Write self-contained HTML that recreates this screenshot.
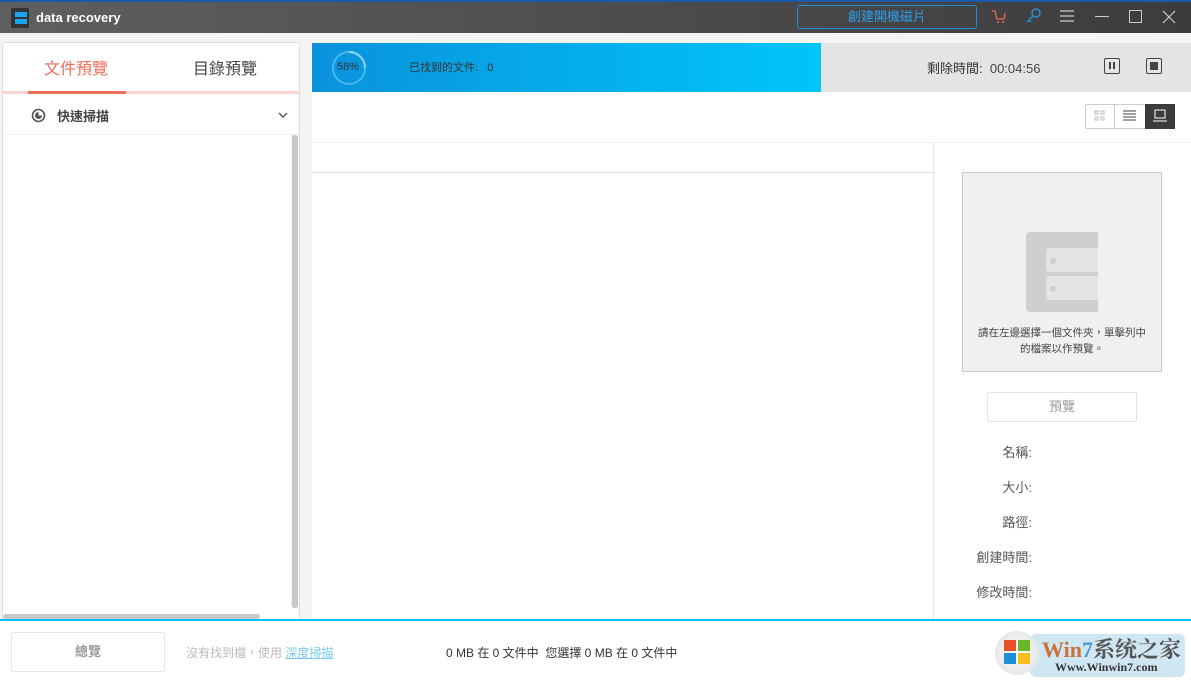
<!DOCTYPE html>
<html><head><meta charset="utf-8"><style>
*{margin:0;padding:0;box-sizing:border-box}
body{width:1191px;height:683px;overflow:hidden;background:#f4f4f4;font-family:"Liberation Sans","Noto Sans CJK TC",sans-serif;position:relative;font-size:13px;color:#333}
.a{position:absolute}
</style></head><body>
<div class="a" style="left:0;top:0;width:1191px;height:33px;background:linear-gradient(90deg,#5f5f5f,#3c3c3c);border-top:2px solid #1a5aa8"></div>
<div class="a" style="left:11px;top:8px;width:18px;height:20px;background:#333;border-radius:2px"></div>
<div class="a" style="left:15px;top:12px;width:12px;height:5px;background:#1aa6ee"></div>
<div class="a" style="left:15px;top:19px;width:12px;height:5px;background:#1aa6ee"></div>
<div class="a" style="left:36px;top:10px;color:#fff;font-weight:bold;font-size:13px">data recovery</div>
<div class="a" style="left:797px;top:5px;width:180px;height:24px;border:1px solid #1e8fd8;border-radius:3px;color:#2aa0ee;text-align:center;line-height:22px;font-size:13px">創建開機磁片</div>
<svg class="a" style="left:990px;top:8px" width="16" height="16"><path d="M2 3h3l2 8h7l1-6" stroke="#e76d5a" fill="none" stroke-width="1.3"/><circle cx="8" cy="14" r="1" fill="#e76d5a"/><circle cx="13" cy="14" r="1" fill="#e76d5a"/></svg>
<svg class="a" style="left:1025px;top:7px" width="18" height="18"><circle cx="11" cy="6" r="4" stroke="#2a90d8" fill="none" stroke-width="1.4"/><path d="M8 9L2 15M4 13l2 2" stroke="#2a90d8" stroke-width="1.4"/></svg>
<svg class="a" style="left:1060px;top:9px" width="14" height="14"><path d="M0 2h14M0 7h14M0 12h14" stroke="#ccc" stroke-width="1.2"/></svg>
<div class="a" style="left:1095px;top:16px;width:14px;height:1px;background:#ccc"></div>
<div class="a" style="left:1129px;top:10px;width:13px;height:13px;border:1px solid #ccc"></div>
<svg class="a" style="left:1162px;top:10px" width="14" height="14"><path d="M1 1l12 12M13 1L1 13" stroke="#ccc" stroke-width="1.2"/></svg>

<div class="a" style="left:2px;top:42px;width:298px;height:579px;background:#fff;border:1px solid #ddd;border-radius:3px 3px 0 0"></div>
<div class="a" style="left:2px;top:91px;width:298px;height:3px;background:#fcd6d0"></div>
<div class="a" style="left:28px;top:91px;width:98px;height:3px;background:#ef6d59"></div>
<div class="a" style="left:44px;top:55px;font-size:16px;color:#ef6d59">文件預覽</div>
<div class="a" style="left:193px;top:55px;font-size:16px;color:#444">目錄預覽</div>
<svg class="a" style="left:31px;top:108px" width="15" height="15"><circle cx="7.5" cy="7.5" r="6" stroke="#555" stroke-width="1.6" fill="none"/><path d="M7.5 4a3.5 3.5 0 1 0 3.5 3.5H7.5z" fill="#555"/></svg>
<div class="a" style="left:57px;top:106px;font-weight:bold;color:#444">快速掃描</div>
<svg class="a" style="left:278px;top:111px" width="10" height="8"><path d="M1 2l4 4 4-4" stroke="#555" fill="none" stroke-width="1.4"/></svg>
<div class="a" style="left:3px;top:134px;width:296px;height:1px;background:#eee"></div>
<div class="a" style="left:291px;top:135px;width:8px;height:473px;background:#f2f2f2"></div>
<div class="a" style="left:292px;top:135px;width:6px;height:473px;background:#c8c8c8;border-radius:3px"></div>
<div class="a" style="left:3px;top:614px;width:257px;height:5px;background:#c8c8c8;border-radius:3px"></div>

<div class="a" style="left:312px;top:43px;width:879px;height:49px;background:#e4e4e4"></div>
<div class="a" style="left:312px;top:43px;width:509px;height:49px;background:linear-gradient(90deg,#0a92dc,#00c6f8)"></div>
<svg class="a" style="left:329px;top:48px" width="40" height="40"><circle cx="20" cy="20" r="16" stroke="#47b7ee" stroke-width="2" fill="none"/><path d="M20 4a16 16 0 0 1 16 16" stroke="#8fd5f8" stroke-width="2" fill="none"/></svg>
<div class="a" style="left:337px;top:61px;font-size:11px;color:#333">58%</div>
<div class="a" style="left:409px;top:59px;font-size:11px;color:#333">已找到的文件:&nbsp;&nbsp; 0</div>
<div class="a" style="left:927px;top:58px;color:#333">剩除時間:&nbsp; <span style="color:#444">00:04:56</span></div>
<div class="a" style="left:1104px;top:58px;width:16px;height:16px;border:1px solid #444;border-radius:2px"></div>
<div class="a" style="left:1109px;top:62px;width:2px;height:7px;background:#444"></div>
<div class="a" style="left:1113px;top:62px;width:2px;height:7px;background:#444"></div>
<div class="a" style="left:1146px;top:58px;width:16px;height:16px;border:1px solid #444;border-radius:2px"></div>
<div class="a" style="left:1150px;top:62px;width:8px;height:8px;background:#444"></div>

<div class="a" style="left:312px;top:92px;width:879px;height:529px;background:#fff"></div>
<div class="a" style="left:312px;top:142px;width:879px;height:1px;background:#f0f0f0"></div>
<div class="a" style="left:1085px;top:104px;width:90px;height:25px;border:1px solid #ccc;border-radius:2px"></div>
<div class="a" style="left:1114px;top:105px;width:1px;height:23px;background:#ccc"></div>
<div class="a" style="left:1145px;top:104px;width:30px;height:25px;background:#3c3c3c"></div>
<svg class="a" style="left:1094px;top:110px" width="12" height="12"><path d="M1 1h3v3H1zM7 1h3v3H7zM1 7h3v3H1zM7 7h3v3H7z" stroke="#bbb" fill="none"/></svg>
<svg class="a" style="left:1123px;top:110px" width="14" height="12"><path d="M0 1h13M0 4h13M0 7h13M0 10h13" stroke="#444"/></svg>
<svg class="a" style="left:1153px;top:109px" width="14" height="14"><path d="M2 1h10v8H2zM0 12h14" stroke="#fff" fill="none"/></svg>
<div class="a" style="left:312px;top:172px;width:621px;height:1px;background:#ddd"></div>
<div class="a" style="left:933px;top:143px;width:1px;height:478px;background:#e6e6e6"></div>
<div class="a" style="left:962px;top:172px;width:200px;height:200px;background:#f0f0f0;border:1px solid #c8c8c8"></div>
<div class="a" style="left:1026px;top:232px;width:72px;height:80px;background:#cfcfcf;border-radius:4px 0 0 4px"></div>
<div class="a" style="left:1046px;top:248px;width:52px;height:24px;background:#e4e4e4;border-radius:3px 0 0 3px"></div>
<div class="a" style="left:1046px;top:276px;width:52px;height:24px;background:#e4e4e4;border-radius:3px 0 0 3px"></div>
<div class="a" style="left:1050px;top:258px;width:6px;height:6px;background:#cfcfcf;border-radius:3px"></div>
<div class="a" style="left:1050px;top:286px;width:6px;height:6px;background:#cfcfcf;border-radius:3px"></div>
<div class="a" style="left:963px;top:325px;width:198px;text-align:center;font-size:10.5px;line-height:16px;color:#444">請在左邊選擇一個文件夾，單擊列中<br>的檔案以作預覽。</div>
<div class="a" style="left:987px;top:392px;width:150px;height:30px;border:1px solid #e4e4e4;border-radius:2px;text-align:center;line-height:28px;color:#999">預覽</div>
<div class="a" style="left:960px;top:435px;width:72px;text-align:right;line-height:35px;color:#555">名稱:<br>大小:<br>路徑:<br>創建時間:<br>修改時間:</div>

<div class="a" style="left:0;top:619px;width:1191px;height:64px;background:#fff;border-top:2px solid #00c3f4"></div>
<div class="a" style="left:11px;top:632px;width:154px;height:40px;border:1px solid #e6e6e6;border-radius:3px;text-align:center;line-height:38px;color:#999;font-weight:bold">總覽</div>
<div class="a" style="left:186px;top:644px;color:#bbb;font-size:12px">沒有找到檔，使用 <span style="color:#7ccaf0;text-decoration:underline">深度掃描</span></div>
<div class="a" style="left:446px;top:644px;color:#333;font-size:12px">0 MB 在 0 文件中&nbsp; 您選擇 0 MB 在 0 文件中</div>
<div class="a" style="left:1030px;top:634px;width:155px;height:43px;background:#cfe6f3;border-radius:6px"></div>
<div class="a" style="left:995px;top:631px;width:44px;height:44px;border-radius:50%;background:radial-gradient(#fff,#ddd)"></div>
<div class="a" style="left:1004px;top:640px;width:12px;height:11px;background:#e8502a"></div>
<div class="a" style="left:1018px;top:640px;width:12px;height:11px;background:#6ab52c"></div>
<div class="a" style="left:1004px;top:653px;width:12px;height:11px;background:#1c8fd8"></div>
<div class="a" style="left:1018px;top:653px;width:12px;height:11px;background:#f6be1a"></div>
<div class="a" style="left:1042px;top:633px;font-size:22px;font-weight:bold;color:#c8723a;font-family:'Liberation Serif','Noto Serif CJK SC',serif">Win<span style="color:#4a9ad0">7</span><span style="color:#555">系统之家</span></div>
<div class="a" style="left:1055px;top:660px;font-size:12px;font-weight:bold;color:#333;font-family:'Liberation Serif',serif">Www.Winwin7.com</div>
</body></html>
